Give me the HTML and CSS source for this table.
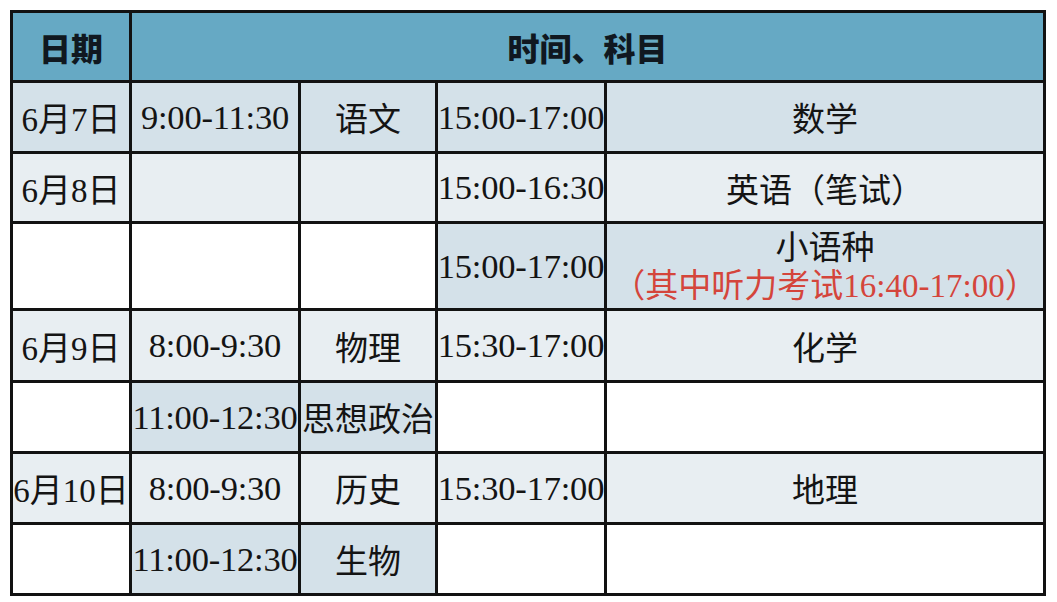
FILE: index.html
```html
<!DOCTYPE html>
<html lang="zh-CN">
<head>
<meta charset="utf-8">
<title>考试时间表</title>
<link rel="stylesheet" href="styles.css">
</head>
<body>
<div class="table">
  <div class="c head">日期</div>
  <div class="c head span4">时间、科目</div>

  <div class="c dark">6月7日</div>
  <div class="c dark num">9:00-11:30</div>
  <div class="c dark">语文</div>
  <div class="c dark num">15:00-17:00</div>
  <div class="c dark">数学</div>

  <div class="c light">6月8日</div>
  <div class="c light"></div>
  <div class="c light"></div>
  <div class="c light num">15:00-16:30</div>
  <div class="c light">英语（笔试）</div>

  <div class="c white"></div>
  <div class="c white"></div>
  <div class="c white"></div>
  <div class="c dark num">15:00-17:00</div>
  <div class="c dark col"><span>小语种</span><span class="red">（其中听力考试16:40-17:00）</span></div>

  <div class="c light">6月9日</div>
  <div class="c light num">8:00-9:30</div>
  <div class="c light">物理</div>
  <div class="c light num">15:30-17:00</div>
  <div class="c light">化学</div>

  <div class="c white"></div>
  <div class="c dark num">11:00-12:30</div>
  <div class="c dark">思想政治</div>
  <div class="c white"></div>
  <div class="c white"></div>

  <div class="c light">6月10日</div>
  <div class="c light num">8:00-9:30</div>
  <div class="c light">历史</div>
  <div class="c light num">15:30-17:00</div>
  <div class="c light">地理</div>

  <div class="c white"></div>
  <div class="c dark num">11:00-12:30</div>
  <div class="c dark">生物</div>
  <div class="c white"></div>
  <div class="c white"></div>
</div>
</body>
</html>
```

FILE: styles.css
```css
html, body {
  margin: 0;
  padding: 0;
  background: #ffffff;
}
body {
  padding: 10px 0 0 10px;
}
.table {
  display: grid;
  width: fit-content;
  grid-template-columns: 116px 166px 134px 166px 436px;
  grid-template-rows: 67px 68px 67px 84px 69px 68px 68px 68px;
  gap: 3px;
  padding: 3px;
  background: #121212;
  font-family: "Liberation Serif", "Noto Sans CJK SC", serif;
  font-size: 33px;
  color: #141414;
}
.c {
  display: flex;
  align-items: center;
  justify-content: center;
  white-space: nowrap;
  overflow: visible;
}
.num {
  font-size: 34.5px;
  letter-spacing: -0.2px;
}
.head {
  background: #66a9c4;
  font-family: "Noto Sans CJK SC", sans-serif;
  font-weight: 900;
  font-size: 32px;
  color: #101820;
}
.span4 {
  grid-column: span 4;
}
.dark {
  background: #d4e1e9;
}
.light {
  background: #e8eef2;
}
.white {
  background: #ffffff;
}
.col {
  flex-direction: column;
  line-height: 38px;
  padding-top: 2px;
}
.red {
  color: #d4453b;
  font-size: 33px;
}
```
